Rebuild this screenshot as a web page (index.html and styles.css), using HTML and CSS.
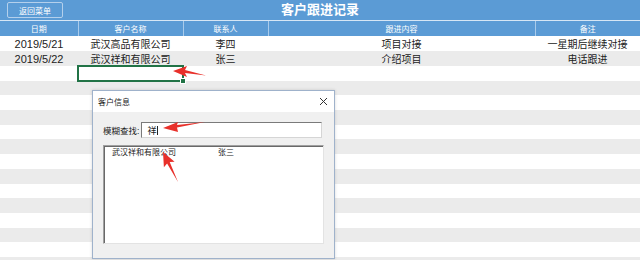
FILE: index.html
```html
<!DOCTYPE html>
<html lang="zh-CN">
<head>
  <meta charset="UTF-8">
  <title>客户跟进记录</title>
  <link rel="stylesheet" href="styles.css">
</head>
<body>
  <div class="topbar">
    <button class="back-btn">返回菜单</button>
    <h1>客户跟进记录</h1>
  </div>

  <table class="sheet">
    <colgroup>
      <col class="c-date">
      <col class="c-name">
      <col class="c-contact">
      <col class="c-content">
      <col class="c-note">
    </colgroup>
    <thead>
      <tr><th>日期</th><th>客户名称</th><th>联系人</th><th>跟进内容</th><th>备注</th></tr>
    </thead>
    <tbody>
      <tr><td class="num">2019/5/21</td><td>武汉高品有限公司</td><td>李四</td><td>项目对接</td><td>一星期后继续对接</td></tr>
      <tr><td class="num">2019/5/22</td><td>武汉祥和有限公司</td><td>张三</td><td>介绍项目</td><td>电话跟进</td></tr>
      <tr><td></td><td class="sel"></td><td></td><td></td><td></td></tr>
      <tr><td></td><td></td><td></td><td></td><td></td></tr>
      <tr><td></td><td></td><td></td><td></td><td></td></tr>
      <tr><td></td><td></td><td></td><td></td><td></td></tr>
      <tr><td></td><td></td><td></td><td></td><td></td></tr>
      <tr><td></td><td></td><td></td><td></td><td></td></tr>
      <tr><td></td><td></td><td></td><td></td><td></td></tr>
      <tr><td></td><td></td><td></td><td></td><td></td></tr>
      <tr><td></td><td></td><td></td><td></td><td></td></tr>
      <tr><td></td><td></td><td></td><td></td><td></td></tr>
      <tr><td></td><td></td><td></td><td></td><td></td></tr>
      <tr><td></td><td></td><td></td><td></td><td></td></tr>
      <tr><td></td><td></td><td></td><td></td><td></td></tr>
      <tr><td></td><td></td><td></td><td></td><td></td></tr>
    </tbody>
  </table>

  <div class="dialog">
    <div class="dialog-title">
      <span>客户信息</span>
      <svg class="close" width="9" height="9" viewBox="0 0 9 9"><path d="M1 1L8 8M8 1L1 8" stroke="#333" stroke-width="1"/></svg>
    </div>
    <div class="dialog-body">
      <div class="search-row">
        <label>模糊查找:</label>
        <div class="search-box">祥<span class="caret"></span></div>
      </div>
      <div class="listbox">
        <div class="list-item"><span class="co">武汉祥和有限公司</span><span>张三</span></div>
      </div>
    </div>
  </div>

  <!-- red annotation arrows -->
  <svg class="marks" width="640" height="260" viewBox="0 0 640 260">
    <polygon points="173,71 187,66 185,70 206,75.5 185,73 187,77" />
    <polygon points="163,128 178,122 177,125 205,122 177,127.5 178,132" />
    <polygon points="163,152 174.6,161.8 169.7,162 178,182 167.1,163.4 163.9,167.2" />
  </svg>
</body>
</html>
```

FILE: styles.css
```css
body {
  margin: 0;
  width: 640px;
  height: 260px;
  overflow: hidden;
  position: relative;
  font-family: "Liberation Sans", "Noto Sans CJK SC", sans-serif;
  color: #222;
  background: #fff;
}

.topbar {
  display: grid;
  grid-template-columns: 1fr auto 1fr;
  align-items: center;
  height: 20px;
  background: #5b9bd5;
  border-bottom: 1px solid #d6e6f5;
}
.back-btn {
  justify-self: start;
  margin-left: 7px;
  width: 56px;
  height: 16px;
  padding: 0;
  font-family: inherit;
  font-size: 8px;
  color: #fff;
  background: #5b9bd5;
  border: 1px solid #b4d0ec;
  border-radius: 2px;
}
.topbar h1 {
  margin: 0;
  font-size: 13px;
  font-weight: bold;
  color: #fff;
  line-height: 20px;
}

.sheet {
  width: 640px;
  table-layout: fixed;
  border-collapse: collapse;
}
.c-date { width: 78px; }
.c-name { width: 105px; }
.c-contact { width: 85px; }
.c-content { width: 267px; }
.c-note { width: 105px; }

.sheet th {
  height: 15px;
  padding: 0;
  font-size: 8px;
  font-weight: normal;
  color: #fff;
  background: #5b9bd5;
  border-left: 1px solid #a9cbeb;
}
.sheet th:first-child {
  border-left: none;
}
.sheet td {
  height: 14.7px;
  padding: 0;
  font-size: 10px;
  text-align: center;
  white-space: nowrap;
}
.sheet td.num {
  font-size: 11px;
}
.sheet tbody tr:nth-child(even) td {
  background: #ebebeb;
}
.sheet td.sel {
  position: relative;
  outline: 2px solid #217346;
  outline-offset: -1px;
}
.sheet td.sel::after {
  content: "";
  position: absolute;
  right: -3px;
  bottom: -3px;
  width: 4px;
  height: 4px;
  background: #217346;
  border: 1px solid #fff;
}

.dialog {
  position: absolute;
  left: 92px;
  top: 90px;
  width: 241px;
  height: 167px;
  border: 1px solid #9fb2cb;
  background: #f0f0f0;
  box-shadow: 0 0 3px rgba(0, 0, 0, 0.15);
  display: flex;
  flex-direction: column;
}
.dialog-title {
  height: 21px;
  display: flex;
  align-items: center;
  justify-content: space-between;
  padding: 0 6px 0 5px;
  background: #fff;
  font-size: 8px;
  color: #222;
}
.dialog-body {
  padding: 10px 10px 0 10px;
}
.search-row {
  display: flex;
  align-items: center;
  gap: 2px;
}
.search-row label {
  font-size: 8.5px;
}
.search-box {
  flex: 1;
  height: 14px;
  display: flex;
  align-items: center;
  padding-left: 5px;
  font-size: 9px;
  background: #fff;
  border: 1px solid #d5d5d5;
  border-top-color: #7a7a7a;
  border-left-color: #7a7a7a;
  margin-right: 2px;
}
.caret {
  display: inline-block;
  width: 1px;
  height: 9px;
  margin-left: 1px;
  background: #222;
}
.listbox {
  margin-top: 7px;
  height: 97px;
  background: #fff;
  border: 1px solid #e3e3e3;
  border-top-color: #a0a0a0;
  border-left-color: #a0a0a0;
  box-shadow: inset 1px 1px 0 #696969;
}
.list-item {
  display: flex;
  padding: 2px 0 0 8px;
  font-size: 8px;
  line-height: 10px;
}
.list-item .co {
  width: 106px;
}

.marks {
  position: absolute;
  left: 0;
  top: 0;
  pointer-events: none;
}
.marks polygon {
  fill: #e8302a;
}
```
